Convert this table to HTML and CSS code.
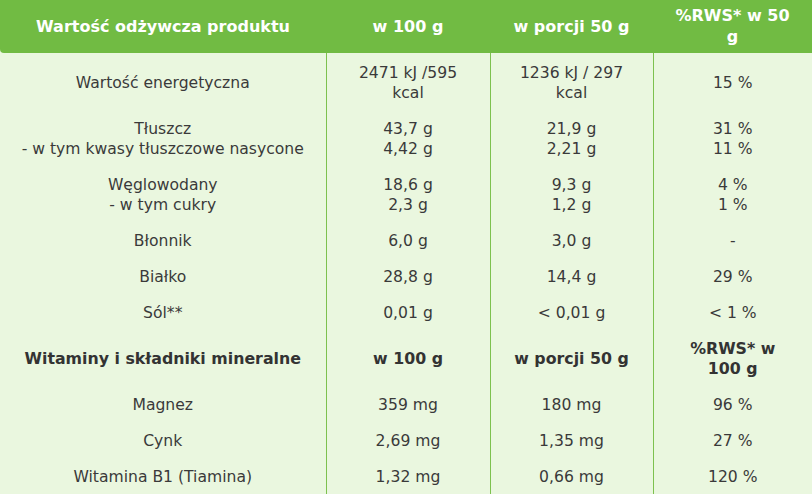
FILE: index.html
```html
<!DOCTYPE html>
<html lang="pl">
<head>
<meta charset="utf-8">
<title>Wartość odżywcza</title>
<link rel="stylesheet" href="styles.css">
</head>
<body>
<table class="nutri">
  <colgroup>
    <col class="c1"><col class="c2"><col class="c3"><col class="c4">
  </colgroup>
  <thead>
    <tr>
      <th class="first">Wartość odżywcza produktu</th>
      <th>w 100 g</th>
      <th>w porcji 50 g</th>
      <th>%RWS* w 50<br>g</th>
    </tr>
  </thead>
  <tbody>
    <tr>
      <td>Wartość energetyczna</td>
      <td>2471 kJ /595<br>kcal</td>
      <td>1236 kJ / 297<br>kcal</td>
      <td>15 %</td>
    </tr>
    <tr>
      <td>Tłuszcz<br>- w tym kwasy tłuszczowe nasycone</td>
      <td>43,7 g<br>4,42 g</td>
      <td>21,9 g<br>2,21 g</td>
      <td>31 %<br>11 %</td>
    </tr>
    <tr>
      <td>Węglowodany<br>- w tym cukry</td>
      <td>18,6 g<br>2,3 g</td>
      <td>9,3 g<br>1,2 g</td>
      <td>4 %<br>1 %</td>
    </tr>
    <tr>
      <td>Błonnik</td>
      <td>6,0 g</td>
      <td>3,0 g</td>
      <td>-</td>
    </tr>
    <tr>
      <td>Białko</td>
      <td>28,8 g</td>
      <td>14,4 g</td>
      <td>29 %</td>
    </tr>
    <tr>
      <td>Sól**</td>
      <td>0,01 g</td>
      <td>&lt; 0,01 g</td>
      <td>&lt; 1 %</td>
    </tr>
    <tr class="sub">
      <td>Witaminy i składniki mineralne</td>
      <td>w 100 g</td>
      <td>w porcji 50 g</td>
      <td>%RWS* w<br>100 g</td>
    </tr>
    <tr>
      <td>Magnez</td>
      <td>359 mg</td>
      <td>180 mg</td>
      <td>96 %</td>
    </tr>
    <tr>
      <td>Cynk</td>
      <td>2,69 mg</td>
      <td>1,35 mg</td>
      <td>27 %</td>
    </tr>
    <tr>
      <td>Witamina B1 (Tiamina)</td>
      <td>1,32 mg</td>
      <td>0,66 mg</td>
      <td>120 %</td>
    </tr>
  </tbody>
</table>
</body>
</html>
```

FILE: styles.css
```css
html, body {
  margin: 0;
  padding: 0;
  background: #eaf7df;
}

.nutri {
  width: 812px;
  border-collapse: collapse;
  table-layout: fixed;
  font-family: "DejaVu Sans", Verdana, sans-serif;
  font-size: 15.6px;
  color: #3a3a3a;
  background: #eaf7df;
}

.c1 { width: 326px; }
.c2 { width: 164px; }
.c3 { width: 163px; }
.c4 { width: 159px; }

.nutri th {
  background: #71bb43;
  color: #ffffff;
  font-weight: bold;
  font-size: 16px;
  line-height: 21px;
  padding: 5px 4px 6px;
  text-align: center;
  height: 42px;
}

.nutri th.first {
  border-bottom-left-radius: 4px;
}

.nutri td {
  text-align: center;
  vertical-align: middle;
  line-height: 20px;
  padding: 8px 4px;
  border-left: 1px solid #7dc14f;
}

.nutri td:first-child {
  border-left: none;
}

.nutri tbody tr:first-child td {
  padding-top: 10px;
}

.nutri tr.sub td {
  font-weight: bold;
  font-size: 15.8px;
  color: #333333;
}
```
